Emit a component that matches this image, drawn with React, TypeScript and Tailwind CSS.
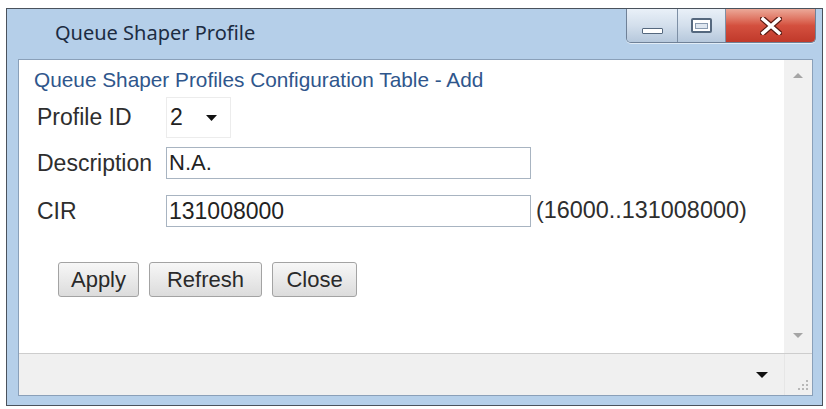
import React from "react";

const sans = { fontFamily: '"Liberation Sans", Arial, sans-serif' };

function CaptionButtons() {
  return (
    <div className="flex h-[34px] -mr-[3px] border border-t-0 border-[#6f8197] rounded-b-[5px] overflow-hidden shadow-[0_1px_0_rgba(255,255,255,0.6)]">
      <div className="w-[51px] h-full flex items-end justify-center pb-[8px] bg-gradient-to-b from-[#e9f0f8] via-[#d3dfec] to-[#b6c8dc] border-r border-[#7d8fa5]">
        <div className="w-[21px] h-[6px] bg-white border border-[#55687e] rounded-[1px]" />
      </div>
      <div className="w-[48px] h-full flex items-center justify-center bg-gradient-to-b from-[#e9f0f8] via-[#d3dfec] to-[#b6c8dc] border-r border-[#7d8fa5]">
        <div className="w-[21px] h-[15px] border-[2px] border-[#55687e] bg-white rounded-[2px] flex items-center justify-center">
          <div className="w-[13px] h-[6px] border border-[#8a9bb0] bg-[#dfe7f0]" />
        </div>
      </div>
      <div className="w-[89px] h-full flex items-center justify-center bg-gradient-to-b from-[#eba898] via-[#d4503f] to-[#c0392a]">
        <svg width="22" height="18" viewBox="0 0 22 18">
          <path d="M3 2 L19 16 M19 2 L3 16" stroke="#5a1a12" strokeWidth="6" strokeLinecap="square" />
          <path d="M3 2 L19 16 M19 2 L3 16" stroke="#ffffff" strokeWidth="3.5" strokeLinecap="square" />
        </svg>
      </div>
    </div>
  );
}

function Row({ label, children, className }: { label: string; children: React.ReactNode; className: string }) {
  return (
    <div className={`flex items-center ml-[3px] ${className}`}>
      <div className="w-[129px] text-[23px] text-[#2e2e2e] leading-none">{label}</div>
      {children}
    </div>
  );
}

function Btn({ label, w }: { label: string; w: string }) {
  return (
    <div
      className={`${w} h-[35px] flex items-center justify-center border border-[#a3a3a3] rounded-[3px] bg-gradient-to-b from-[#f7f7f7] to-[#dcdcdc] text-[22px] text-[#2a2a2a] leading-none`}
    >
      {label}
    </div>
  );
}

export default function App() {
  return (
    <div className="w-[826px] h-[409px] bg-white pt-[8px] pl-[6px]" style={sans}>
      <div className="w-[817px] h-[398px] border border-[#4a525c] bg-[#b5cfe9] flex flex-col pl-[11px] pr-[9px] pb-[9px]">
        {/* title bar */}
        <div className="h-[50px] flex items-start justify-between">
          <div
            className="pl-[37px] pt-[12px] text-[20px] leading-[24px] text-[#1c2c42]"
            style={{ fontFamily: '"Noto Sans", "Open Sans", sans-serif' }}
          >
            Queue Shaper Profile
          </div>
          <CaptionButtons />
        </div>
        {/* client */}
        <div className="flex-1 border border-[#8aa0b9] bg-white flex flex-col">
          <div className="flex-1 flex">
            <div className="flex-1 flex flex-col pl-[15px] pt-[8px]">
              <div className="text-[20.8px] leading-[24px] text-[#2f568c]">
                Queue Shaper Profiles Configuration Table - Add
              </div>
              <Row label="Profile ID" className="mt-[5px] h-[41px]">
                <div className="w-[65px] h-[41px] border border-[#ececec] flex items-center pl-[3px]">
                  <span className="text-[23px] text-[#222] leading-none">2</span>
                  <svg width="11" height="6" viewBox="0 0 11 6" className="ml-[23px]">
                    <path d="M0 0 H11 L5.5 6 Z" fill="#111" />
                  </svg>
                </div>
              </Row>
              <Row label="Description" className="mt-[9px] h-[32px]">
                <div className="w-[365px] h-[32px] border border-[#a8b4c1] flex items-center pl-[2px] text-[22px] text-[#222] leading-none">
                  N.A.
                </div>
              </Row>
              <Row label="CIR" className="mt-[16px] h-[32px]">
                <div className="w-[365px] h-[32px] border border-[#a8b4c1] flex items-center pl-[2px] text-[23px] text-[#222] leading-none">
                  131008000
                </div>
                <div className="ml-[5px] text-[23.4px] text-[#2e2e2e] leading-none">(16000..131008000)</div>
              </Row>
              <div className="flex gap-[10px] mt-[35px] ml-[24px]">
                <Btn label="Apply" w="w-[81px]" />
                <Btn label="Refresh" w="w-[113px]" />
                <Btn label="Close" w="w-[85px]" />
              </div>
            </div>
            {/* scrollbar */}
            <div className="w-[28px] bg-[#f1f1f1] flex flex-col items-center justify-between pt-[13px] pb-[15px]">
              <svg width="10" height="5" viewBox="0 0 10 5">
                <path d="M0 5 L5 0 L10 5 Z" fill="#a5a5a5" />
              </svg>
              <svg width="10" height="5" viewBox="0 0 10 5">
                <path d="M0 0 H10 L5 5 Z" fill="#a5a5a5" />
              </svg>
            </div>
          </div>
          {/* status bar */}
          <div className="h-[42px] border-t border-[#cdcdcd] bg-[#f0f0f0] flex">
            <div className="flex-1 flex items-center justify-end pr-[16px]">
              <svg width="12" height="6" viewBox="0 0 12 6">
                <path d="M0 0 H12 L6 6 Z" fill="#111" />
              </svg>
            </div>
            <div className="w-[28px] border-l border-[#e6e6e6] flex items-end justify-end pr-[3px] pb-[4px]">
              <svg width="12" height="12" viewBox="0 0 12 12">
                <g fill="#b8b8b8">
                  <rect x="9" y="1" width="2" height="2" />
                  <rect x="5" y="5" width="2" height="2" />
                  <rect x="9" y="5" width="2" height="2" />
                  <rect x="1" y="9" width="2" height="2" />
                  <rect x="5" y="9" width="2" height="2" />
                  <rect x="9" y="9" width="2" height="2" />
                </g>
              </svg>
            </div>
          </div>
        </div>
      </div>
    </div>
  );
}
